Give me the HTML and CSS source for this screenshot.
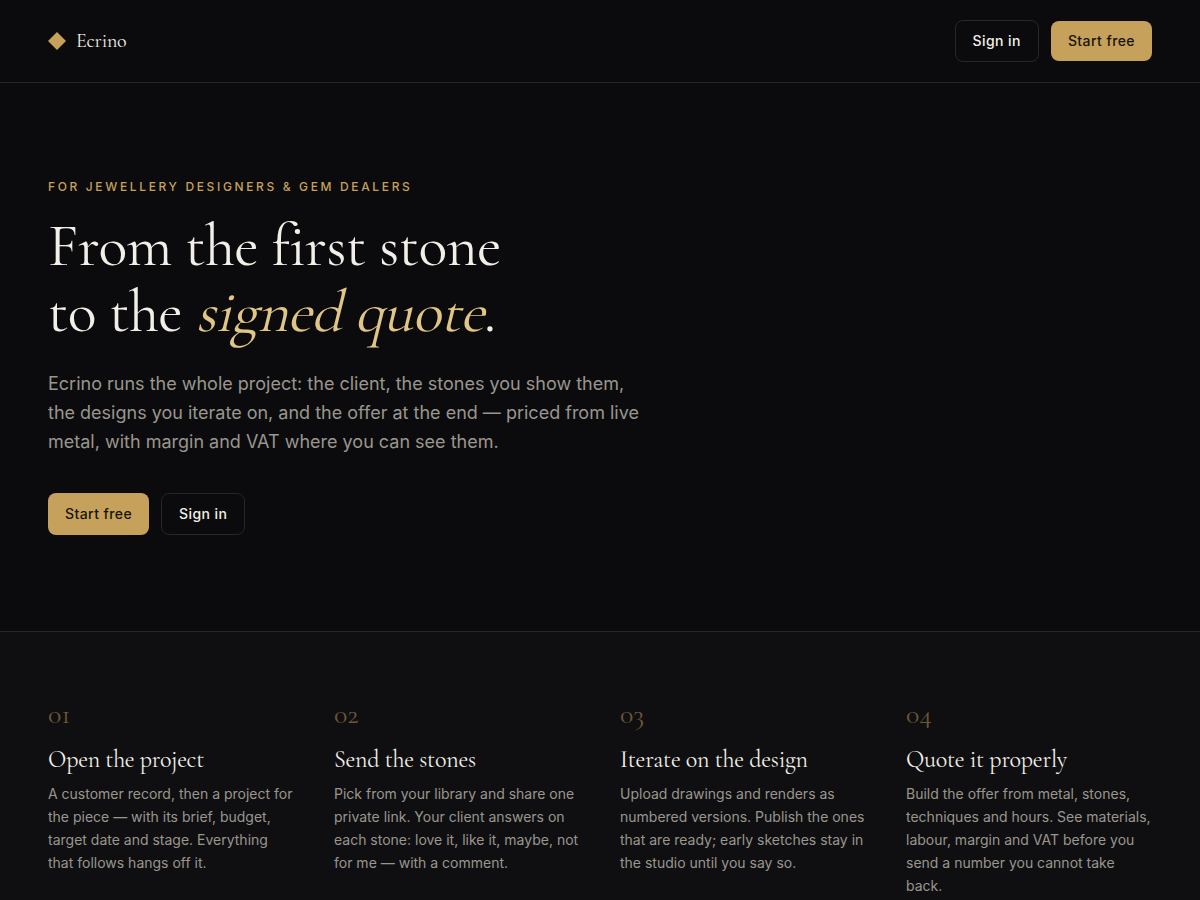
FILE: index.html
```html
<!DOCTYPE html>
<html lang="en">
<head>
    <meta charset="UTF-8">
    <meta name="viewport" content="width=device-width, initial-scale=1">
    <title>Ecrino</title>
    <link rel="stylesheet" href="styles.css">
</head>
<body>
    <header class="site-header">
        <a class="brand" href="#">
            <svg class="brand-mark" viewBox="0 0 18 18" aria-hidden="true">
                <path d="M9 0 L18 9 L9 18 L0 9 Z" fill="#c6a15b"/>
            </svg>
            <span>Ecrino</span>
        </a>
        <nav class="actions header-actions">
            <a class="btn btn-ghost" href="#">Sign in</a>
            <a class="btn btn-gold" href="#">Start free</a>
        </nav>
    </header>

    <main>
        <section class="hero">
            <p class="eyebrow">For jewellery designers &amp; gem dealers</p>
            <h1>From the first stone<br>to the <em>signed quote</em>.</h1>
            <p class="lead">Ecrino runs the whole project: the client, the stones you show them, the designs you iterate on, and the offer at the end — priced from live metal, with margin and VAT where you can see them.</p>
            <div class="actions">
                <a class="btn btn-gold" href="#">Start free</a>
                <a class="btn btn-ghost" href="#">Sign in</a>
            </div>
        </section>

        <section class="steps">
            <article class="step">
                <span class="step-number">01</span>
                <h2>Open the project</h2>
                <p>A customer record, then a project for the piece — with its brief, budget, target date and stage. Everything that follows hangs off it.</p>
            </article>
            <article class="step">
                <span class="step-number">02</span>
                <h2>Send the stones</h2>
                <p>Pick from your library and share one private link. Your client answers on each stone: love it, like it, maybe, not for me — with a comment.</p>
            </article>
            <article class="step">
                <span class="step-number">03</span>
                <h2>Iterate on the design</h2>
                <p>Upload drawings and renders as numbered versions. Publish the ones that are ready; early sketches stay in the studio until you say so.</p>
            </article>
            <article class="step">
                <span class="step-number">04</span>
                <h2>Quote it properly</h2>
                <p>Build the offer from metal, stones, techniques and hours. See materials, labour, margin and VAT before you send a number you cannot take back.</p>
            </article>
        </section>
    </main>
</body>
</html>
```
FILE: styles.css
```css
* {
    box-sizing: border-box;
}
body {
    margin: 0;
    background: #0b0b0d;
    color: #f2efe8;
    font-family: Inter, sans-serif;
    font-size: 14px;
}
h1, h2, p {
    margin: 0;
}
a {
    color: inherit;
    text-decoration: none;
}
.brand, h1, h2, .step-number {
    font-family: "Cormorant Garamond", "Liberation Serif", serif;
    font-weight: 400;
}
.brand, h1, h2 {
    letter-spacing: -0.01em;
}
.site-header {
    display: flex;
    justify-content: space-between;
    align-items: center;
    padding: 20px 48px;
    border-bottom: 1px solid #26262b;
}
.brand {
    display: flex;
    align-items: center;
    gap: 10px;
    font-size: 20px;
    line-height: 24px;
}
.brand-mark {
    width: 18px;
    height: 18px;
}
.actions {
    display: flex;
    gap: 12px;
}
.header-actions {
    align-items: center;
}
.btn {
    display: flex;
    align-items: center;
    padding: 10px 17px;
    border-radius: 8px;
    font-weight: 500;
    line-height: 20px;
    letter-spacing: 0.03em;
}
.btn-gold {
    background: #c6a15b;
    color: #1a1408;
}
.btn-ghost {
    border: 1px solid #26262b;
}
.hero {
    padding: 96px 48px;
}
.eyebrow {
    color: #c6a15b;
    font-size: 12px;
    font-weight: 500;
    line-height: 16px;
    letter-spacing: 0.22em;
    text-transform: uppercase;
}
h1 {
    margin-top: 18px;
    font-size: 60px;
    line-height: 66px;
}
/* slanted roman, not the narrower cut italic */
h1 em {
    display: inline-block;
    color: #e0c584;
    font-style: normal;
    transform: skewX(-14deg);
    transform-origin: 0 75%;
}
.lead {
    max-width: 600px;
    margin: 24px 0 37px;
    color: #9a968e;
    font-size: 18px;
    line-height: 29px;
}
.steps {
    display: grid;
    grid-template-columns: repeat(auto-fit, minmax(220px, 1fr));
    gap: 40px;
    padding: 64px 48px;
    background: #0f0f11;
    border-top: 1px solid #26262b;
}
.step-number {
    display: block;
    color: #6b5836;
    font-size: 28px;
    line-height: 36px;
}
.step h2 {
    margin: 13px 0 7px;
    font-size: 24px;
    line-height: 30px;
}
.step p {
    color: #9a968e;
    line-height: 23px;
}
```
